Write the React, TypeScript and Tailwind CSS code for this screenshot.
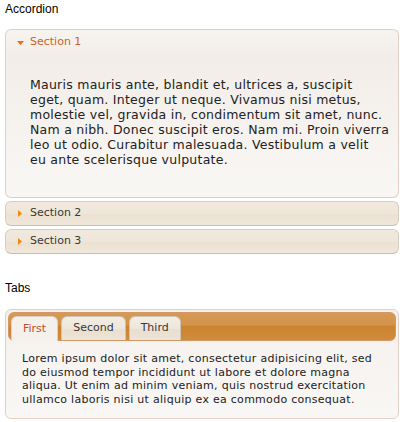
import { useState } from 'react';

const sections = [
  {
    title: 'Section 1',
    lines: [
      'Mauris mauris ante, blandit et, ultrices a, suscipit',
      'eget, quam. Integer ut neque. Vivamus nisi metus,',
      'molestie vel, gravida in, condimentum sit amet, nunc.',
      'Nam a nibh. Donec suscipit eros. Nam mi. Proin viverra',
      'leo ut odio. Curabitur malesuada. Vestibulum a velit',
      'eu ante scelerisque vulputate.',
    ],
  },
  { title: 'Section 2', lines: ['Sed non urna. Donec et ante. Phasellus eu ligula.'] },
  { title: 'Section 3', lines: ['Nam enim risus, molestie et, porta ac, aliquam ac, risus.'] },
];

const tabs = [
  {
    label: 'First',
    body: 'Lorem ipsum dolor sit amet, consectetur adipisicing elit, sed do eiusmod tempor incididunt ut labore et dolore magna aliqua. Ut enim ad minim veniam, quis nostrud exercitation ullamco laboris nisi ut aliquip ex ea commodo consequat.',
  },
  { label: 'Second', body: 'Phasellus mattis tincidunt nibh.' },
  { label: 'Third', body: 'Nam dui erat, auctor a, dignissim quis.' },
];

function Caret({ open }: { open: boolean }) {
  return open ? (
    <svg width="7" height="4" viewBox="0 0 7 4" className="shrink-0">
      <path d="M0 0 L7 0 L3.5 4 Z" fill="#f06a14" />
    </svg>
  ) : (
    <svg width="4" height="7" viewBox="0 0 4 7" className="shrink-0">
      <path d="M0 0 L4 3.5 L0 7 Z" fill="#f08a14" />
    </svg>
  );
}

export default function App() {
  const [open, setOpen] = useState(0);
  const [tab, setTab] = useState(0);

  return (
    <div className="w-[405px] h-[422px] bg-white px-[5px] font-['DejaVu_Sans',Verdana,sans-serif]">
      <h2 className="font-['Liberation_Sans',Arial,sans-serif] text-[12px] leading-[16px] text-black pt-px">
        Accordion
      </h2>

      <div className="mt-[12px] w-[394px] flex flex-col gap-[3px]">
        {sections.map((s, i) => {
          const active = i === open;
          return (
            <div key={s.title}>
              <button
                onClick={() => setOpen(i)}
                className={
                  active
                    ? 'w-full h-[26px] flex items-center gap-[6px] pl-[11px] text-left text-[11px] text-[#d2601c] border border-[#e0cfc2] border-b-0 rounded-t-[6px] bg-[linear-gradient(#f7f4f0,#f2ede8)]'
                    : 'w-full h-[25px] flex items-center gap-[8px] pl-[12px] text-left text-[11px] text-[#383838] border border-[#d8cdc0] border-b-[#c8beb2] rounded-[6px] bg-[linear-gradient(#f1e9de_0%,#efe6d9_50%,#ebe1d2_52%,#efe7db_100%)]'
                }
              >
                <Caret open={active} />
                <span>{s.title}</span>
              </button>
              {active && (
                <div className="h-[143px] border border-[#e0cfc2] border-t-0 rounded-b-[6px] bg-[linear-gradient(#f2ede8,#f9f7f5)] pl-[24px] pt-[22px] text-[12.5px] tracking-[0.25px] leading-[15px] text-[#222]">
                  {s.lines.map((l) => (
                    <div key={l} className="whitespace-nowrap">
                      {l}
                    </div>
                  ))}
                </div>
              )}
            </div>
          );
        })}
      </div>

      <h2 className="font-['Liberation_Sans',Arial,sans-serif] text-[12px] leading-[16px] text-black mt-[26px]">
        Tabs
      </h2>

      <div className="mt-[13px] w-[394px] h-[110px] border border-[#e0cfc2] rounded-[6px] bg-[linear-gradient(#f4f0ec,#f9f7f5)] p-[2px]">
        <div className="h-[29px] rounded-[6px] border border-[#d49768] bg-[linear-gradient(#d69a52_0%,#d2924a_45%,#cb842e_50%,#d08c3c_100%)] flex items-end gap-[3px] pl-[2px]">
          {tabs.map((t, i) => {
            const active = i === tab;
            return (
              <button
                key={t.label}
                onClick={() => setTab(i)}
                className={
                  active
                    ? 'h-[25px] -mb-px px-[11px] rounded-t-[6px] border border-b-0 border-[#e0cfc2] bg-[#f4f0ec] text-[11px] text-[#c4501f]'
                    : 'h-[24px] px-[11px] rounded-t-[6px] border border-b-0 border-[#cdc3b7] bg-[linear-gradient(#f3ede4_0%,#eee6da_50%,#e9dfcf_55%,#ece4d7_100%)] text-[11px] text-[#383838]'
                }
              >
                {t.label}
              </button>
            );
          })}
        </div>
        <div className="px-[14px] pt-[11px] text-[11px] tracking-[0.28px] leading-[13.5px] text-[#222]">{tabs[tab].body}</div>
      </div>
    </div>
  );
}
